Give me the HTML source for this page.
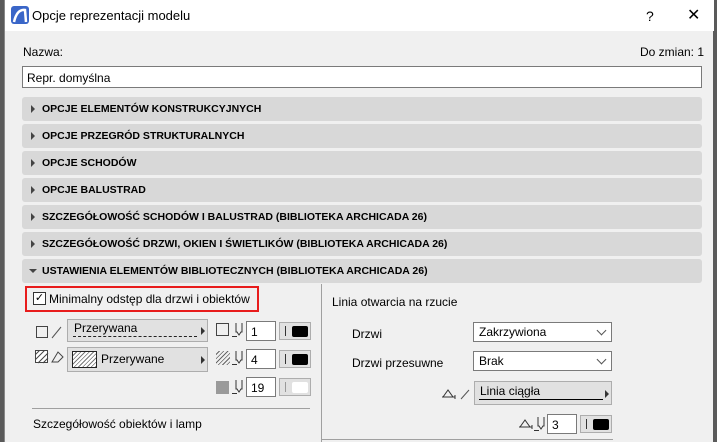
<!DOCTYPE html>
<html><head><meta charset="utf-8"><style>
*{box-sizing:border-box;margin:0;padding:0}
body{width:717px;height:442px;overflow:hidden;background:#5a5a5a;font-family:"Liberation Sans",sans-serif;font-size:12px;color:#000;position:relative}
.win{position:absolute;left:4px;top:0;width:709px;height:442px;background:#f0f0f0;border-left:1px solid #888}
.title{position:absolute;left:0;top:0;width:709px;height:31px;background:#fff}
.a{position:absolute}
.bar{position:absolute;left:17px;width:680px;height:24px;background:#d8d8d8;border-radius:3px;font-weight:bold;font-size:10.5px;line-height:24px;padding-left:20px}
.bar:before{content:"";position:absolute;left:9px;top:8px;border-left:4px solid #444;border-top:4px solid transparent;border-bottom:4px solid transparent}
.bar.open:before{left:7px;top:10px;border-top:4px solid #444;border-left:4px solid transparent;border-right:4px solid transparent;border-bottom:0}
.box{position:absolute;background:#fff;border:1px solid #7a7a7a}
.btn{position:absolute;background:#e1e1e1;border:1px solid #adadad}
.sel{position:absolute;background:#fff;border:1px solid #7a7a7a;padding-left:5px;line-height:18px}
.sel:after{content:"";position:absolute;right:6px;top:4px;width:6px;height:6px;border-right:1px solid #555;border-bottom:1px solid #555;transform:rotate(45deg)}
</style></head><body>
<svg width="0" height="0" style="position:absolute"><defs>
<symbol id="pen" viewBox="0 0 14 16"><path d="M5 1v9h1l2 3 2-3h1V1M1 14.5h5" fill="none" stroke="#333" stroke-width="1"/></symbol>
<symbol id="door" viewBox="0 0 22 12"><path d="M1 9h3M2 9l5-7 5 7H4M12 9h2M14 7v4" fill="none" stroke="#333" stroke-width="1"/></symbol>
</defs></svg>
<div class="win">
<div class="title">
 <svg class="a" style="left:6px;top:6px" width="18" height="18"><rect width="18" height="18" rx="3" fill="#3a66c8"/><path d="M3 16 Q6 3 14 4 L15 16" fill="none" stroke="#fff" stroke-width="2.5"/></svg>
 <div class="a" style="left:27px;top:8px;font-size:13px">Opcje reprezentacji modelu</div>
 <div class="a" style="left:641px;top:8px;font-size:14px">?</div>
 <div class="a" style="left:682px;top:5px;font-size:16px">✕</div>
</div>
<div class="a" style="left:18px;top:45px">Nazwa:</div>
<div class="a" style="left:635px;top:45px">Do zmian: 1</div>
<div class="box" style="left:17px;top:66px;width:680px;height:22px;padding:4px 0 0 4px">Repr. domyślna</div>
<div class="bar" style="top:97px">OPCJE ELEMENTÓW KONSTRUKCYJNYCH</div>
<div class="bar" style="top:124px">OPCJE PRZEGRÓD STRUKTURALNYCH</div>
<div class="bar" style="top:151px">OPCJE SCHODÓW</div>
<div class="bar" style="top:178px">OPCJE BALUSTRAD</div>
<div class="bar" style="top:205px">SZCZEGÓŁOWOŚĆ SCHODÓW I BALUSTRAD (BIBLIOTEKA ARCHICADA 26)</div>
<div class="bar" style="top:232px">SZCZEGÓŁOWOŚĆ DRZWI, OKIEN I ŚWIETLIKÓW (BIBLIOTEKA ARCHICADA 26)</div>
<div class="bar open" style="top:259px">USTAWIENIA ELEMENTÓW BIBLIOTECZNYCH (BIBLIOTEKA ARCHICADA 26)</div>
<div class="a" style="left:20px;top:286px;width:234px;height:26px;border:2px solid #e81c1c"></div>
<div class="a" style="left:28px;top:292px;width:13px;height:13px;border:1px solid #333;background:#fff;font-size:11px;line-height:11px;text-align:center">✓</div>
<div class="a" style="left:44px;top:292px">Minimalny odstęp dla drzwi i obiektów</div>
<div class="a" style="left:316px;top:284px;width:1px;height:158px;background:#a0a0a0"></div>
<div class="a" style="left:27px;top:408px;width:278px;height:1px;background:#a0a0a0"></div>
<div class="a" style="left:316px;top:439px;width:292px;height:1px;background:#a0a0a0"></div>
<!-- left controls -->
<div class="a" style="left:31px;top:326px;width:12px;height:12px;border:1px solid #444"></div>
<svg class="a" style="left:46px;top:325px" width="12" height="14"><path d="M1 13L10 2" stroke="#555"/></svg>
<div class="btn" style="left:62px;top:319px;width:141px;height:23px;padding:1px 0 0 6px">Przerywana<div class="a" style="left:5px;top:16px;width:124px;border-top:1px dashed #222"></div><div class="a" style="left:133px;top:7px;border-left:4px solid #333;border-top:4px solid transparent;border-bottom:4px solid transparent"></div></div>
<svg class="a" style="left:30px;top:350px" width="30" height="14"><rect x="0.5" y="0.5" width="12" height="12" fill="#fff" stroke="#444"/><path d="M0 10l10-10M3 13l10-10M0 5l5-5M8 13l5-5" stroke="#444"/><path d="M17 12l6-10 5 5-5 5z" fill="none" stroke="#444"/></svg>
<div class="btn" style="left:62px;top:347px;width:141px;height:25px;padding:4px 0 0 33px">Przerywane<div class="a" style="left:4px;top:3px;width:25px;height:17px;border:1px solid #222;background:repeating-linear-gradient(135deg,#fff 0 2px,#777 2px 3px)"></div><div class="a" style="left:133px;top:8px;border-left:4px solid #333;border-top:4px solid transparent;border-bottom:4px solid transparent"></div></div>
<div class="a" style="left:211px;top:323px;width:13px;height:13px;border:1px solid #444"></div>
<div class="a" style="left:211px;top:351px;width:14px;height:14px;background:repeating-linear-gradient(135deg,transparent 0 2px,#666 2px 3px)"></div>
<div class="a" style="left:211px;top:381px;width:13px;height:13px;background:#9a9a9a"></div>
<svg class="a" style="left:226px;top:322px" width="14" height="16"><use href="#pen"/></svg>
<svg class="a" style="left:226px;top:350px" width="14" height="16"><use href="#pen"/></svg>
<svg class="a" style="left:226px;top:379px" width="14" height="16"><use href="#pen"/></svg>
<div class="box" style="left:241px;top:321px;width:30px;height:20px;padding:3px 0 0 4px">1</div>
<div class="box" style="left:241px;top:349px;width:30px;height:20px;padding:3px 0 0 4px">4</div>
<div class="box" style="left:241px;top:377px;width:30px;height:20px;padding:3px 0 0 4px">19</div>
<div class="btn" style="left:274px;top:322px;width:32px;height:18px"><div class="a" style="left:5px;top:3px;width:1px;height:10px;background:#333"></div><div class="a" style="left:12px;top:3px;width:16px;height:11px;background:#000;border-radius:2px"></div></div>
<div class="btn" style="left:274px;top:350px;width:32px;height:18px"><div class="a" style="left:5px;top:3px;width:1px;height:10px;background:#333"></div><div class="a" style="left:12px;top:3px;width:16px;height:11px;background:#000;border-radius:2px"></div></div>
<div class="btn" style="left:274px;top:378px;width:32px;height:18px"><div class="a" style="left:5px;top:3px;width:1px;height:10px;background:#999"></div><div class="a" style="left:12px;top:3px;width:16px;height:11px;background:#fff;border-radius:2px"></div></div>
<div class="a" style="left:28px;top:417px">Szczegółowość obiektów i lamp</div>
<!-- right -->
<div class="a" style="left:327px;top:295px">Linia otwarcia na rzucie</div>
<div class="a" style="left:347px;top:327px">Drzwi</div>
<div class="a" style="left:347px;top:356px">Drzwi przesuwne</div>
<div class="sel" style="left:468px;top:322px;width:139px;height:20px">Zakrzywiona</div>
<div class="sel" style="left:468px;top:351px;width:139px;height:20px">Brak</div>
<svg class="a" style="left:436px;top:388px" width="30" height="12"><use href="#door" width="22" height="12"/><path d="M20 11L28 2" stroke="#555"/></svg>
<div class="btn" style="left:469px;top:381px;width:138px;height:24px;padding:2px 0 0 5px">Linia ciągła<div class="a" style="left:4px;top:17px;width:124px;height:1px;background:#000"></div><div class="a" style="left:130px;top:8px;border-left:4px solid #333;border-top:4px solid transparent;border-bottom:4px solid transparent"></div></div>
<svg class="a" style="left:513px;top:418px" width="22" height="12"><use href="#door" width="22" height="12"/></svg>
<svg class="a" style="left:528px;top:416px" width="14" height="16"><use href="#pen"/></svg>
<div class="box" style="left:542px;top:414px;width:30px;height:20px;padding:3px 0 0 4px">3</div>
<div class="btn" style="left:575px;top:415px;width:32px;height:18px"><div class="a" style="left:5px;top:3px;width:1px;height:10px;background:#333"></div><div class="a" style="left:12px;top:3px;width:16px;height:11px;background:#000;border-radius:2px"></div></div>
</div>
</body></html>
